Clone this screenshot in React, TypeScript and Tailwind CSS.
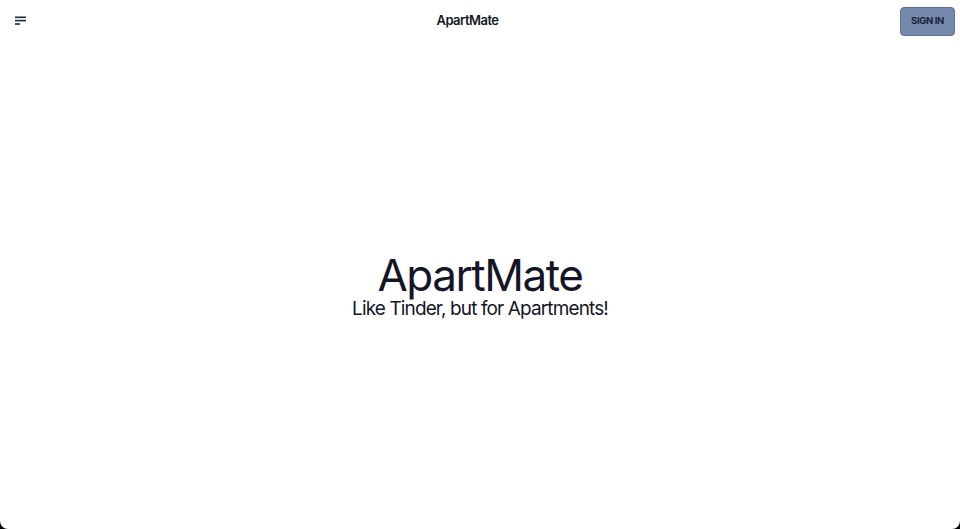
const MenuIcon = () => (
  <svg width="12" height="10" viewBox="0 0 12 10" fill="none">
    <rect x="0" y="0.5" width="11" height="1.6" fill="#1f2937" />
    <rect x="0" y="3.8" width="11" height="1.6" fill="#1f2937" />
    <rect x="0" y="7.2" width="5" height="1.6" fill="#1f2937" />
  </svg>
);

export default function App() {
  return (
    <div className="h-screen bg-black" style={{ fontFamily: "Inter, 'Noto Sans', sans-serif" }}>
      <div className="flex h-full flex-col rounded-b-[8px] bg-white">
        {/* header */}
        <header className="flex h-10 items-center justify-between pl-[15px] pr-[5px] pt-[1px]">
          <button className="flex h-6 w-6 items-center">
            <MenuIcon />
          </button>
          <span className="-ml-[4px] text-[13px] font-semibold tracking-[-0.04em] text-[#111827]">ApartMate</span>
          <button className="mt-[1px] h-[29px] w-[55px] rounded-[4px] border border-[#5b7094] bg-[#7489ab] text-[9.5px] font-bold tracking-[-0.04em] text-[#17223b]">
            SIGN IN
          </button>
        </header>

        {/* hero */}
        <main className="flex flex-1 flex-col items-center justify-center pt-[2px] text-[#141627]">
          <h1 className="text-[44px] font-normal leading-[44px] tracking-[-0.033em]">ApartMate</h1>
          <p className="pt-[2px] text-[19px] leading-[20px] tracking-[-0.046em]">Like Tinder, but for Apartments!</p>
        </main>
      </div>
    </div>
  );
}
